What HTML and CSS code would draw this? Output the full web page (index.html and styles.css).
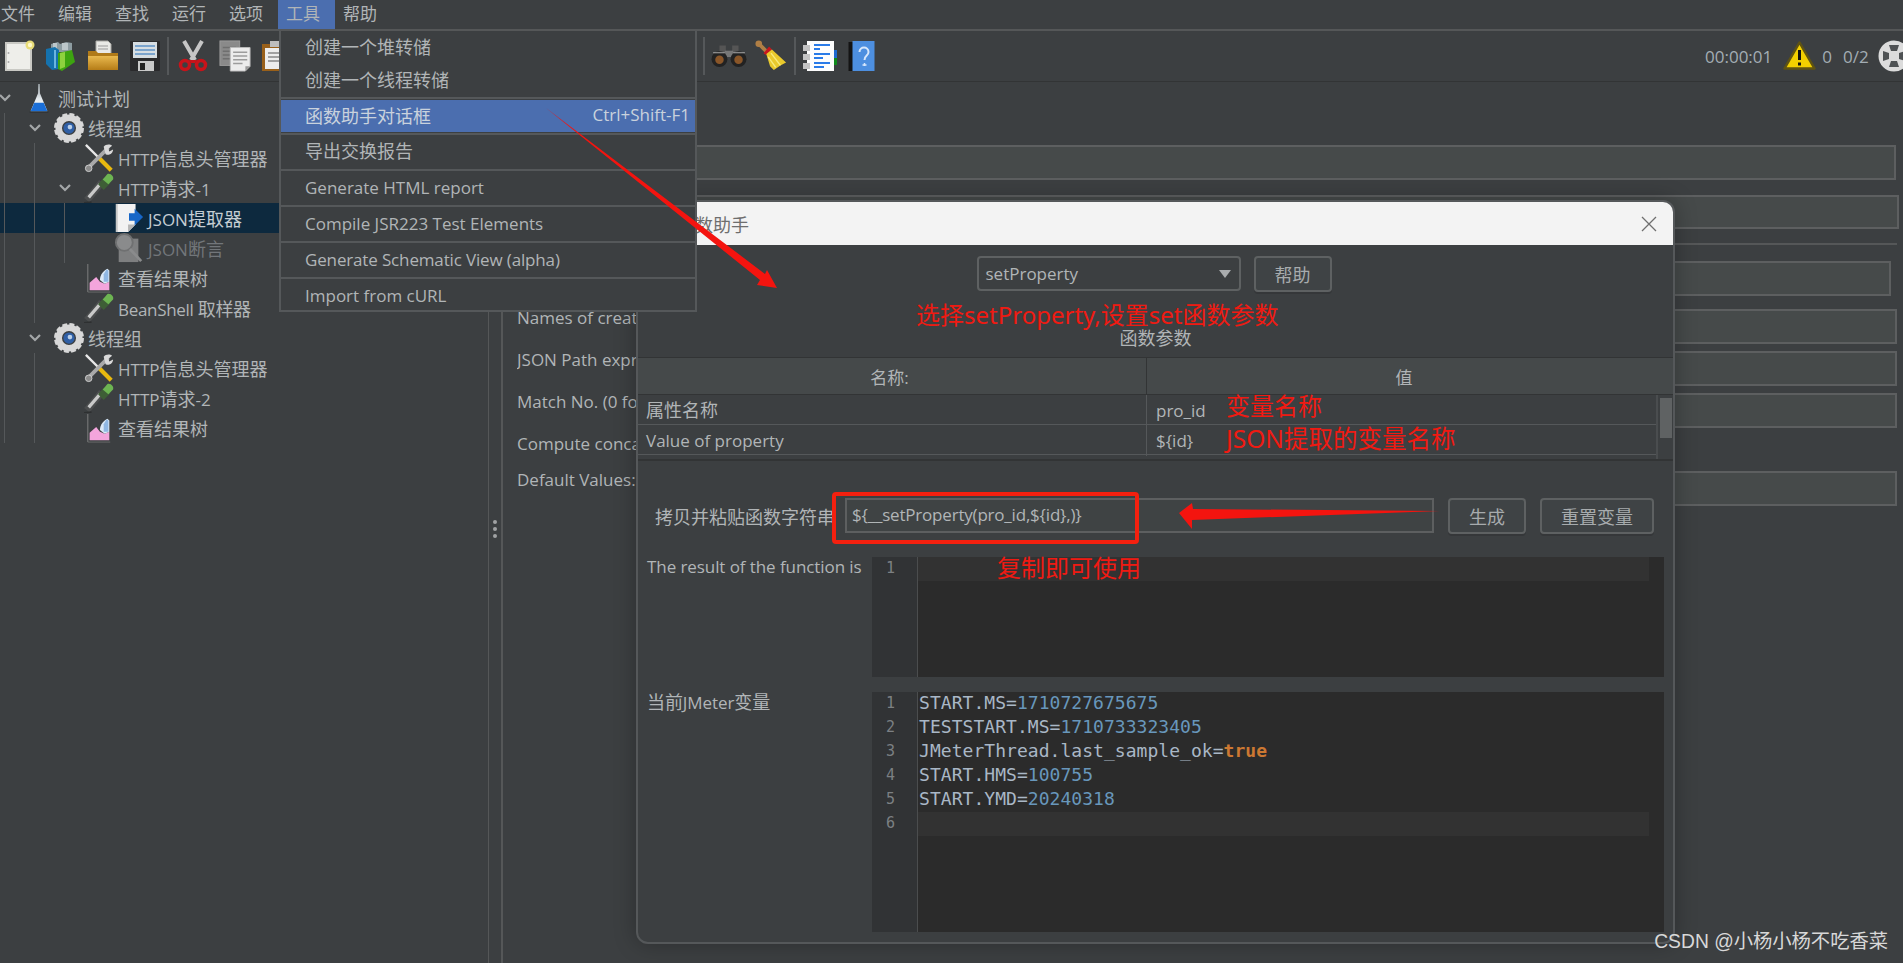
FILE: index.html
```html
<!DOCTYPE html>
<html lang="zh-CN">
<head>
  <meta charset="UTF-8">
  <title>Apache JMeter</title>
  <link rel="stylesheet" href="styles.css">
</head>
<body>
  <svg class="sprite" width="0" height="0">
    <defs>
      <linearGradient id="folderGrad" x1="0" y1="0" x2="0" y2="1"><stop offset="0" stop-color="#e9b94e"/><stop offset="1" stop-color="#b57c17"/></linearGradient>
      <linearGradient id="flaskGrad" x1="0" y1="0" x2="0" y2="1"><stop offset="0" stop-color="#8f979b"/><stop offset=".55" stop-color="#e4eaee"/><stop offset="1" stop-color="#ffffff"/></linearGradient>
      <symbol id="i-new" viewBox="0 0 32 32"><rect x="3" y="3" width="25" height="27" fill="#eeeeea" stroke="#c9c9c4" stroke-width="2"/><circle cx="5.500" cy="13" r="1" fill="#aaa"/><circle cx="5.500" cy="22" r="1" fill="#aaa"/><circle cx="27" cy="5" r="4.500" fill="#e8dc78"/><circle cx="27" cy="5" r="2.200" fill="#fff8c8"/></symbol>
      <symbol id="i-books" viewBox="0 0 32 32"><path d="M6 4l7-2 2 2 6-2 6 1v9H6z" fill="#8d9ca1"/><path d="M8 3l4 0 0 8-4 0zM17 3l6 0 0 7-6 0z" fill="#bcc6c9"/><path d="M1 9l9-2 4 3v19l-7 1-6-6z" fill="#1572ad"/><path d="M9 10h2v18H9z" fill="#6ab5de"/><path d="M13 13l14-3 3 12-13 9-4-2z" fill="#3da410"/><path d="M15 13l5-1v15l-5 2z" fill="#8ed23e"/></symbol>
      <symbol id="i-open" viewBox="0 0 32 32"><path d="M9 1h12l3 3v11H9z" fill="#e9e9e6" stroke="#a9a9a4"/><path d="M11 6h10M11 9h10" stroke="#999"/><path d="M1 11h8l2 2h20v17H1z" fill="#b07a18"/><path d="M1 16h30v14H1z" fill="url(#folderGrad)"/></symbol>
      <symbol id="i-save" viewBox="0 0 32 32"><rect x="1" y="1" width="30" height="30" rx="1" fill="#2a2a2c"/><rect x="4" y="2" width="24" height="16" fill="#d6dde2"/><path d="M6 6h20M6 10h20M6 14h20" stroke="#7ba4cd" stroke-width="2"/><rect x="9" y="21" width="16" height="10" fill="#c9c9c9"/><rect x="11" y="23" width="5" height="7" fill="#222"/></symbol>
      <symbol id="i-scissors" viewBox="0 0 32 32"><path d="M7 1l11 19M25 1L14 20" stroke="#c6c6c6" stroke-width="4" fill="none"/><circle cx="8" cy="25" r="4.500" stroke="#c8131a" stroke-width="3.500" fill="#3c3f41"/><circle cx="24" cy="25" r="4.500" stroke="#c8131a" stroke-width="3.500" fill="#3c3f41"/><path d="M12 20l8 0-2 3h-4z" fill="#c8131a"/></symbol>
      <symbol id="i-copy" viewBox="0 0 34 34"><rect x="1" y="1" width="21" height="26" fill="#8a8a8a" stroke="#9c9c9c"/><path d="M4 8h14M4 12h14M4 16h14M4 20h14" stroke="#6f6f6f" stroke-width="1.500"/><path d="M12 8h21v20l-5 5H12z" fill="#ececec" stroke="#bbb"/><path d="M15 13h15M15 17h15M15 21h15M15 25h10" stroke="#9c9c9c" stroke-width="1.500"/><path d="M28 33v-5h5z" fill="#999"/></symbol>
      <symbol id="i-paste" viewBox="0 0 32 32"><rect x="1" y="4" width="27" height="27" fill="#99601a"/><rect x="4" y="8" width="21" height="21" fill="#ededed"/><rect x="9" y="1" width="11" height="6" fill="#bdbdbd"/><path d="M7 13h15M7 17h15M7 21h15" stroke="#888" stroke-width="1.500"/></symbol>
      <symbol id="i-binoculars" viewBox="0 0 34 22"><path d="M8 1h6v8H8zM20 1h6v8h-6z" fill="#555"/><path d="M13 6h8v6h-8z" fill="#777"/><circle cx="8" cy="14" r="7.500" fill="#222"/><circle cx="26" cy="14" r="7.500" fill="#222"/><circle cx="8" cy="14.500" r="4" fill="#8a5628"/><circle cx="26" cy="14.500" r="4" fill="#8a5628"/><path d="M2 8h11M21 8h11" stroke="#aaa"/></symbol>
      <symbol id="i-broom" viewBox="0 0 34 34"><circle cx="4" cy="4" r="3.500" fill="#b07f45"/><path d="M4 4l9 9" stroke="#b07f45" stroke-width="4"/><path d="M9 14l6-7 3 3-6 6z" fill="#c8161d"/><path d="M12 15l6-5 15 14-6 3-7 5-4-4z" fill="#e9c92c"/><path d="M17 14l10 13M14 18l8 11" stroke="#f7ea7c" stroke-width="1.500"/></symbol>
      <symbol id="i-list" viewBox="0 0 36 32"><path d="M30 10h5v8h-5z" fill="#1f6ad0"/><path d="M30 18h5v7h-5z" fill="#0f8a1c"/><rect x="5" y="1" width="27" height="30" fill="#fdfdfd"/><rect x="1" y="5" width="7" height="6" fill="#c4c4c4"/><rect x="1" y="14" width="7" height="6" fill="#c4c4c4"/><rect x="1" y="23" width="7" height="6" fill="#c4c4c4"/><path d="M12 5h16M12 9h6M12 14h16M12 18h9M12 23h16M12 27h10" stroke="#2a7be8" stroke-width="2"/></symbol>
      <symbol id="i-help" viewBox="0 0 27 32"><rect x="0" y="2" width="9" height="29" fill="#141414"/><rect x="4" y="1" width="22" height="30" fill="#4d8fe0"/><path d="M11 12c0-6 9-6 9 0 0 4-4 3-4 8" stroke="#d7e7fb" stroke-width="2" fill="none"/><path d="M16 23v3M14 25h4" stroke="#d7e7fb" stroke-width="1.500"/></symbol>
      <symbol id="i-warning" viewBox="0 0 33 30"><path d="M16.500 1.500L31.500 27.500H1.500z" fill="#f2cf00" stroke="#5f5312" stroke-width="2.500" stroke-linejoin="round"/><path d="M16.500 9v10" stroke="#111" stroke-width="3"/><path d="M15 21.500h3v3h-3z" fill="#111"/></symbol>
      <symbol id="i-circle" viewBox="0 0 32 32"><circle cx="16" cy="16" r="15.500" fill="#dcdcdc"/><path d="M11 5h10l-2 6h-6zM11 27h10l-2-6h-6zM5 11v10l6-2v-6zM27 11v10l-6-2v-6z" fill="#4f5254"/></symbol>
      <symbol id="i-flask" viewBox="0 0 32 32"><path d="M15 1h2v10l8 19H7l8-19z" fill="url(#flaskGrad)"/><path d="M11 21h10l4 9H7z" fill="#1b6fd8"/><path d="M6 31h20" stroke="#2c2f30"/></symbol>
      <symbol id="i-gear" viewBox="0 0 32 32"><circle cx="16" cy="16" r="11" fill="none" stroke="#d8d8d8" stroke-width="7"/><circle cx="16" cy="16" r="14" fill="none" stroke="#d8d8d8" stroke-width="4" stroke-dasharray="5 2.330"/><circle cx="16" cy="16" r="6" fill="#2f5fa5"/><circle cx="17" cy="15" r="2.500" fill="#b9cfe8"/></symbol>
      <symbol id="i-tools" viewBox="0 0 32 32"><path d="M2 2l14 14" stroke="#e8e8e8" stroke-width="2.500"/><path d="M15 15l14 14" stroke="#e8b90f" stroke-width="4.500"/><path d="M26 5L5 26" stroke="#a9a9a9" stroke-width="4"/><path d="M21 4c2-3 7-3 9-1l-4 3 1 3 4-2c0 4-4 7-8 5z" fill="#d9d9d9"/><circle cx="5" cy="27" r="3.500" fill="#8b8b8b" stroke="#d0d0d0"/></symbol>
      <symbol id="i-dropper" viewBox="0 0 32 32"><path d="M3 29l16-19" stroke="#4b4d4e" stroke-width="7.500"/><path d="M5 26l12-14" stroke="#c9c9c9" stroke-width="3.500"/><path d="M0 32l8-1" stroke="#2e3031" stroke-width="2"/><path d="M15 12l6-7 7 6-7 7z" fill="#3e5f36"/><path d="M20 7l5-6c4-1 7 3 6 6l-5 5z" fill="#6db552"/></symbol>
      <symbol id="i-extractor" viewBox="0 0 32 32"><path d="M2 1h21v22l-8 8H2z" fill="#f2f2f2"/><path d="M15 31v-8h8z" fill="#b5b5b5"/><path d="M2 1h2v30H2z" fill="#c8c8c8"/><path d="M16 11h6V6l9 9-9 9v-5h-6z" fill="#1766c7"/></symbol>
      <symbol id="i-assert" viewBox="0 0 32 32"><path d="M5 6h21v25H5z" fill="#7e7f80"/><circle cx="11" cy="10" r="9" fill="#8a8b8c" stroke="#6f7071" stroke-width="2"/><path d="M17 17l12 13" stroke="#8a8b8c" stroke-width="3"/></symbol>
      <symbol id="i-graph" viewBox="0 0 32 32"><path d="M4 1v30" stroke="#6a6c6d" stroke-width="1.500"/><path d="M4 31h24" stroke="#6a6c6d"/><path d="M6 29v-8l7-6 4 5 5 2 5-2v9z" fill="#f3a5dc"/><path d="M17 18c0-6 4-10 8-12l2 2v12l-5 2z" fill="#dbe9f7"/><path d="M21 20v-8l3-5 2 1v12z" fill="#8fb7e3"/></symbol>
      <symbol id="i-chevron" viewBox="0 0 14 10"><path d="M2 2l5 5 5-5" fill="none" stroke="#a4a7a8" stroke-width="2.200"/></symbol>
    </defs>
  </svg>

  <div class="app">
    <div class="menubar">
      <span class="menubar-item">文件</span>
      <span class="menubar-item">编辑</span>
      <span class="menubar-item">查找</span>
      <span class="menubar-item">运行</span>
      <span class="menubar-item">选项</span>
      <span class="menubar-item active">工具</span>
      <span class="menubar-item">帮助</span>
    </div>

    <div class="toolbar">
      <span class="tool"><svg class="tool-icon"><use href="#i-new"/></svg></span>
      <span class="tool"><svg class="tool-icon"><use href="#i-books"/></svg></span>
      <span class="tool"><svg class="tool-icon"><use href="#i-open"/></svg></span>
      <span class="tool"><svg class="tool-icon"><use href="#i-save"/></svg></span>
      <span class="tool-sep first"></span>
      <span class="tool"><svg class="tool-icon"><use href="#i-scissors"/></svg></span>
      <span class="tool"><svg class="tool-icon"><use href="#i-copy"/></svg></span>
      <span class="tool"><svg class="tool-icon"><use href="#i-paste"/></svg></span>
      <span class="tool-hidden"></span>
      <span class="tool-sep"></span>
      <span class="tool"><svg class="tool-icon wide"><use href="#i-binoculars"/></svg></span>
      <span class="tool"><svg class="tool-icon wide"><use href="#i-broom"/></svg></span>
      <span class="tool-sep last"></span>
      <span class="tool"><svg class="tool-icon wide"><use href="#i-list"/></svg></span>
      <span class="tool"><svg class="tool-icon"><use href="#i-help"/></svg></span>
      <div class="status">
        <span class="status-time">00:00:01</span>
        <svg class="status-warning"><use href="#i-warning"/></svg>
        <span class="status-errors">0</span>
        <span class="status-threads">0/2</span>
        <svg class="status-circle"><use href="#i-circle"/></svg>
      </div>
    </div>

    <div class="workspace">
      <div class="tree">
        <div class="tree-row"><svg class="chevron"><use href="#i-chevron"/></svg><svg class="tree-icon"><use href="#i-flask"/></svg><span class="zh">测试计划</span></div>
        <div class="tree-group">
          <div class="tree-row"><svg class="chevron"><use href="#i-chevron"/></svg><svg class="tree-icon"><use href="#i-gear"/></svg><span class="zh">线程组</span></div>
          <div class="tree-group">
            <div class="tree-row leaf"><svg class="tree-icon"><use href="#i-tools"/></svg><span>HTTP<span class="zh">信息头管理器</span></span></div>
            <div class="tree-row"><svg class="chevron"><use href="#i-chevron"/></svg><svg class="tree-icon"><use href="#i-dropper"/></svg><span>HTTP<span class="zh">请求</span>-1</span></div>
            <div class="tree-group">
              <div class="tree-row leaf selected"><svg class="tree-icon"><use href="#i-extractor"/></svg><span>JSON<span class="zh">提取器</span></span></div>
              <div class="tree-row leaf disabled"><svg class="tree-icon"><use href="#i-assert"/></svg><span>JSON<span class="zh">断言</span></span></div>
            </div>
            <div class="tree-row leaf"><svg class="tree-icon"><use href="#i-graph"/></svg><span class="zh">查看结果树</span></div>
            <div class="tree-row leaf"><svg class="tree-icon"><use href="#i-dropper"/></svg><span class="bean">BeanShell <span class="zh">取样器</span></span></div>
          </div>
          <div class="tree-row"><svg class="chevron"><use href="#i-chevron"/></svg><svg class="tree-icon"><use href="#i-gear"/></svg><span class="zh">线程组</span></div>
          <div class="tree-group">
            <div class="tree-row leaf"><svg class="tree-icon"><use href="#i-tools"/></svg><span>HTTP<span class="zh">信息头管理器</span></span></div>
            <div class="tree-row leaf"><svg class="tree-icon"><use href="#i-dropper"/></svg><span>HTTP<span class="zh">请求</span>-2</span></div>
            <div class="tree-row leaf"><svg class="tree-icon"><use href="#i-graph"/></svg><span class="zh">查看结果树</span></div>
          </div>
        </div>
      </div>

      <div class="splitter"><i></i><i></i><i></i></div>

      <div class="form">
        <div class="field-row row-name"><div class="field"></div></div>
        <div class="field-row row-comment"><div class="field"></div></div>
        <div class="form-line"></div>
        <div class="field-row row-scope"><div class="field"></div></div>
        <div class="field-row"><span class="form-label">Names of created variables:</span><div class="field"></div></div>
        <div class="field-row"><span class="form-label">JSON Path expressions:</span><div class="field"></div></div>
        <div class="field-row"><span class="form-label">Match No. (0 for Random):</span><div class="field"></div></div>
        <div class="field-row row-check"><span class="form-label">Compute concatenation var (suffix _ALL):</span></div>
        <div class="field-row"><span class="form-label">Default Values:</span><div class="field"></div></div>
      </div>
    </div>
  </div>

  <div class="dialog">
    <div class="dialog-title">
      <span class="zh">函数助手</span>
      <svg class="dialog-close" viewBox="0 0 16 16"><path d="M1 1l14 14M15 1L1 15" stroke="#6f6f6f" stroke-width="1.300"/></svg>
    </div>
    <div class="combo-row">
      <div class="combo"><span>setProperty</span><b class="combo-arrow"></b></div>
      <button class="btn btn-help">帮助</button>
    </div>
    <div class="params-title zh">函数参数</div>
    <div class="params">
      <div class="params-head">
        <div>名称:</div>
        <div>值</div>
      </div>
      <div class="params-body">
        <div class="params-rows">
          <div class="params-row"><div class="zh">属性名称</div><div>pro_id</div></div>
          <div class="params-row"><div>Value of property</div><div>${id}</div></div>
        </div>
        <div class="scrollbar"><div class="scrollbar-thumb"></div></div>
      </div>
    </div>
    <div class="copy-row">
      <span class="copy-label zh">拷贝并粘贴函数字符串</span>
      <div class="copy-input">${__setProperty(pro_id,${id},)}</div>
      <button class="btn btn-make">生成</button>
      <button class="btn btn-reset">重置变量</button>
    </div>
    <div class="output-row">
      <span class="output-label">The result of the function is</span>
      <div class="editor editor-result">
        <div class="gutter"><div>1</div></div>
        <div class="code"><div class="code-line current"></div></div>
      </div>
    </div>
    <div class="output-row">
      <span class="output-label"><span class="zh">当前</span>JMeter<span class="zh">变量</span></span>
      <div class="editor editor-vars">
        <div class="gutter"><div>1</div><div>2</div><div>3</div><div>4</div><div>5</div><div>6</div></div>
        <div class="code">
          <div class="code-line">START.MS=<span class="num">1710727675675</span></div>
          <div class="code-line">TESTSTART.MS=<span class="num">1710733323405</span></div>
          <div class="code-line">JMeterThread.last_sample_ok=<span class="kw">true</span></div>
          <div class="code-line">START.HMS=<span class="num">100755</span></div>
          <div class="code-line">START.YMD=<span class="num">20240318</span></div>
          <div class="code-line current"></div>
        </div>
      </div>
    </div>
  </div>

  <div class="tools-menu">
    <div class="tools-item first zh">创建一个堆转储</div>
    <div class="tools-item first zh">创建一个线程转储</div>
    <div class="tools-sep"></div>
    <div class="tools-item hot"><span class="zh">函数助手对话框</span><span>Ctrl+Shift-F1</span></div>
    <div class="tools-sep"></div>
    <div class="tools-item zh">导出交换报告</div>
    <div class="tools-sep"></div>
    <div class="tools-item">Generate HTML report</div>
    <div class="tools-sep"></div>
    <div class="tools-item">Compile JSR223 Test Elements</div>
    <div class="tools-sep"></div>
    <div class="tools-item tight">Generate Schematic View (alpha)</div>
    <div class="tools-sep"></div>
    <div class="tools-item">Import from cURL</div>
  </div>

  <!-- red notes drawn on top of the screenshot -->
  <svg class="marks" viewBox="0 0 1903 963">
    <path d="M546 108L765 274L767 270L777 288L757 285L760 280z" fill="#f4140f"/>
    <rect x="834" y="494" width="303" height="48" rx="2" fill="none" stroke="#f4200f" stroke-width="4"/>
    <path d="M1179 513L1192 503L1193 509L1440 511L1192 520L1192 529z" fill="#f4140f"/>
  </svg>
  <div class="note note-choose">选择setProperty,设置set函数参数</div>
  <div class="note note-name">变量名称</div>
  <div class="note note-json">JSON提取的变量名称</div>
  <div class="note note-copy">复制即可使用</div>
  <div class="watermark">CSDN @小杨小杨不吃香菜</div>
</body>
</html>
```

FILE: styles.css
```css
* {
  box-sizing: border-box;
}
html, body {
  margin: 0;
  height: 100%;
  overflow: hidden;
}
body {
  position: relative;
  width: 1903px;
  height: 963px;
  background-color: #3c3f41;
  color: #b1b5b7;
  font-family: "Open Sans", "Noto Sans CJK SC", sans-serif;
  font-size: 17px;
}
.sprite {
  position: absolute;
}
.zh {
  font-size: 18px;
}

/* menu bar */
.menubar {
  display: flex;
  height: 31px;
  margin-left: -7px;
  border-bottom: 2px solid #555758;
}
.menubar-item {
  height: 29px;
  padding: 0 15px 0 8px;
  line-height: 28px;
}
.menubar-item.active {
  background-color: #4b6eaf;
}

/* toolbar */
.toolbar {
  display: flex;
  align-items: center;
  height: 51px;
  margin-left: -2px;
  border-bottom: 1px solid #323435;
}
.tool {
  display: flex;
  justify-content: center;
  align-items: center;
  width: 42px;
  flex: none;
}
.tool-icon {
  width: 32px;
  height: 32px;
}
.tool-icon.wide {
  width: 36px;
}
.tool-sep {
  width: 2px;
  height: 38px;
  flex: none;
  margin: 0 3px 0 5px;
  background-color: #55585a;
}
.tool-sep.first {
  margin-left: 1px;
}
.tool-sep.last {
  margin-left: 2px;
}
.tool-hidden {
  width: 400px;
  flex: none;
}
.status {
  display: flex;
  align-items: center;
  margin-left: 822px;
  color: #a3adb4;
  white-space: nowrap;
}
.status-warning {
  width: 33px;
  height: 30px;
  margin-left: 11px;
}
.status-errors {
  margin-left: 6px;
}
.status-threads {
  margin-left: 11px;
}
.status-circle {
  width: 32px;
  height: 32px;
  margin-left: 9px;
  flex: none;
}

/* tree */
.workspace {
  display: flex;
  height: 881px;
}
.tree {
  width: 489px;
  padding-top: 1px;
  border-right: 1px solid #555758;
  overflow: hidden;
  isolation: isolate;
  background-color: #3c3f41;
}
.tree-group {
  margin-left: 4px;
  padding-left: 25px;
  border-left: 1px solid #55585a;
}
.tree-row {
  position: relative;
  display: flex;
  align-items: center;
  height: 30px;
  white-space: nowrap;
}
.tree-row.leaf {
  padding-left: 24px;
}
.tree-row.selected {
  color: #c4cdd3;
}
.tree-row.selected::before {
  content: "";
  position: absolute;
  top: 0;
  bottom: 0;
  left: -200px;
  right: -400px;
  z-index: -1;
  background-color: #0d293e;
}
.tree-row.disabled {
  color: #72767a;
}
.bean {
  letter-spacing: -0.300px;
}
.chevron {
  width: 14px;
  height: 10px;
  flex: none;
  margin: 0 10px 0 0;
  position: relative;
  left: -2px;
}
.tree-icon {
  width: 30px;
  height: 30px;
  flex: none;
  margin-right: 4px;
}

/* splitter */
.splitter {
  display: flex;
  flex-direction: column;
  justify-content: center;
  align-items: center;
  gap: 3px;
  width: 11px;
  margin-right: 1px;
  padding-top: 12px;
}
.splitter i {
  width: 4px;
  height: 4px;
  border-radius: 50%;
  background-color: #a0a2a3;
}

/* sampler form behind the dialog */
.form {
  flex: 1;
  display: flex;
  flex-direction: column;
  padding: 63px 6px 0 14px;
  border-left: 2px solid #555758;
}
.field-row {
  display: flex;
  height: 35px;
  margin-bottom: 7px;
}
.row-name {
  margin-right: 1px;
  margin-bottom: 15px;
  padding-left: 150px;
}
.row-comment {
  height: 34px;
  margin-right: -2px;
  margin-bottom: 14px;
  padding-left: 150px;
}
.row-scope {
  margin-right: 6px;
  margin-bottom: 13px;
  padding-left: 150px;
}
.row-check {
  height: 29px;
}
.form-line {
  height: 2px;
  margin-bottom: 16px;
  background-color: #555758;
}
.form-label {
  width: 119px;
  height: 22px;
  flex: none;
  margin-right: 181px;
  overflow: hidden;
  line-height: 18px;
  white-space: nowrap;
}
.field {
  flex: 1;
  background-color: #464a4a;
  border: 2px solid #5d5f60;
}

/* tools menu */
.tools-menu {
  position: absolute;
  top: 31px;
  left: 279px;
  width: 418px;
  height: 281px;
  background-color: #3c3f41;
  border: solid #55585a;
  border-width: 0 2px 2px 2px;
}
.tools-item {
  display: flex;
  justify-content: space-between;
  align-items: center;
  height: 34px;
  padding: 0 5px 2px 24px;
}
.tools-item.zh {
  padding-bottom: 4px;
}
.tools-item.first {
  height: 33px;
}
.tools-item.tight {
  letter-spacing: -0.150px;
}
.tools-item.hot {
  height: 32px;
  margin: 1px 0;
  padding-bottom: 3px;
  background-color: #4b6eaf;
  color: #c9d2dd;
}
.tools-sep {
  height: 2px;
  background-color: #55585a;
}

/* function helper dialog */
.dialog {
  position: absolute;
  top: 200px;
  left: 636px;
  width: 1039px;
  height: 744px;
  border: 2px solid #55585a;
  border-radius: 12px;
  background-color: #3c3f41;
  box-shadow: 0 0 22px rgba(0, 0, 0, 0.28);
  overflow: hidden;
}
.dialog-title {
  display: flex;
  justify-content: space-between;
  align-items: center;
  height: 43px;
  padding: 0 16px 0 39px;
  background-color: #f3f3f3;
  color: #6e6e6e;
}
.dialog-close {
  width: 16px;
  height: 16px;
}
.combo-row {
  display: flex;
  justify-content: center;
  gap: 13px;
  padding: 11px 3px 0 0;
}
.combo {
  display: flex;
  justify-content: space-between;
  align-items: center;
  width: 264px;
  height: 35px;
  padding: 0 8px 0 7px;
  border: 2px solid #5e6162;
  border-radius: 4px;
  background-color: #3c3f41;
}
.combo-arrow {
  width: 0;
  height: 0;
  border: solid transparent;
  border-width: 8px 6px 0 6px;
  border-top-color: #a9acae;
}
.btn {
  height: 36px;
  padding: 0;
  border: 2px solid #5e6162;
  border-radius: 4px;
  background-color: #3f4345;
  color: #a7abad;
  font-family: inherit;
  font-size: 18px;
  box-shadow: 0 2px 0 #353739;
}
.btn-help {
  width: 78px;
}
.params-title {
  height: 22px;
  margin-top: 35px;
  text-align: center;
  line-height: 22px;
}
.params {
  height: 104px;
  margin-top: 8px;
  border-bottom: 2px solid #323435;
}
.params-head {
  display: grid;
  grid-template-columns: 509px 1fr;
  height: 38px;
  border: solid #323435;
  border-width: 1px 0;
  background-color: #45494a;
  text-align: center;
  line-height: 40px;
}
.params-head div:first-child {
  padding-right: 5px;
  border-right: 1px solid #323435;
}
.params-head div:last-child {
  padding-right: 12px;
}
.params-body {
  display: flex;
  height: 64px;
}
.params-rows {
  flex: 1;
}
.params-row {
  display: grid;
  grid-template-columns: 509px 1fr;
  height: 30px;
  border-bottom: 1px solid #55585a;
  line-height: 31px;
}
.params-row div {
  padding-left: 8px;
}
.params-row div:first-child {
  border-right: 1px solid #55585a;
}
.params-row div:last-child {
  padding-left: 9px;
}
.scrollbar {
  width: 17px;
  padding: 3px 2px 0 2px;
  border-left: 2px solid #4a4d4f;
}
.scrollbar-thumb {
  width: 12px;
  height: 40px;
  background-color: #5f6263;
}
.copy-row {
  display: flex;
  align-items: center;
  height: 37px;
  margin-top: 36px;
  padding-left: 17px;
}
.copy-label {
  width: 190px;
  flex: none;
  white-space: nowrap;
}
.copy-input {
  width: 589px;
  height: 35px;
  margin-right: 14px;
  padding-left: 5px;
  border: 2px solid #5d5f60;
  background-color: #3f4344;
  line-height: 30px;
  white-space: nowrap;
  letter-spacing: -0.200px;
}
.btn-make {
  width: 78px;
  margin-right: 14px;
}
.btn-reset {
  width: 114px;
}
.output-row {
  display: flex;
  margin-top: 15px;
  padding-left: 9px;
}
.copy-row + .output-row {
  margin-top: 23px;
}
.output-label {
  width: 225px;
  flex: none;
  line-height: 20px;
  white-space: nowrap;
  letter-spacing: -0.080px;
}
.editor {
  display: flex;
  width: 792px;
  background-color: #2b2b2b;
  font-family: "DejaVu Sans Mono", "Liberation Mono", monospace;
  font-size: 18px;
  line-height: 22px;
}
.editor-result {
  height: 120px;
}
.editor-vars {
  height: 240px;
}
.gutter {
  width: 46px;
  flex: none;
  padding-right: 22px;
  border-right: 1px solid #4b4d4e;
  background-color: #313335;
  color: #7c8083;
  text-align: right;
  font-size: 15px;
}
.gutter div {
  height: 24px;
}
.code {
  flex: 1;
  padding: 0 15px 0 1px;
  color: #a9b7c6;
  letter-spacing: 0.040px;
}
.code-line {
  height: 24px;
  white-space: pre;
}
.code-line.current {
  margin-left: -1px;
  background-color: #323232;
}
.num {
  color: #6897bb;
}
.kw {
  color: #cc7832;
  font-weight: bold;
}

/* annotations on top of everything */
.marks {
  position: absolute;
  top: 0;
  left: 0;
  width: 1903px;
  height: 963px;
  pointer-events: none;
}
.note {
  position: absolute;
  color: #f01a12;
  font-family: "Noto Sans", "Noto Sans CJK SC", sans-serif;
  font-size: 24px;
  line-height: 30px;
  white-space: nowrap;
}
.note-choose {
  top: 300px;
  left: 916px;
}
.note-name {
  top: 391px;
  left: 1226px;
}
.note-json {
  top: 424px;
  left: 1226px;
  font-size: 24.500px;
}
.note-copy {
  top: 553px;
  left: 997px;
}
.watermark {
  position: absolute;
  top: 930px;
  right: 15px;
  color: #d8d8d8;
  font-family: "Liberation Sans", "Noto Sans CJK SC", sans-serif;
  font-size: 19.300px;
  line-height: 24px;
  white-space: nowrap;
}
```
